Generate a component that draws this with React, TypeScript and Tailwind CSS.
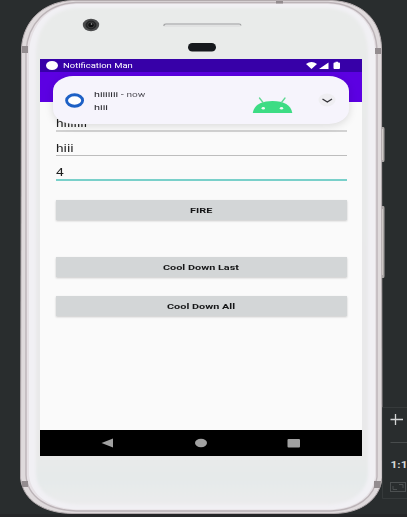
import type { ReactNode } from "react";

function PhoneBody() {
  return (
    <svg className="absolute inset-0" width="407" height="517" viewBox="0 0 407 517" fill="none">
      <defs>
        <linearGradient id="face" x1="0" y1="0" x2="0" y2="1">
          <stop offset="0" stopColor="#e9ebea" />
          <stop offset="0.5" stopColor="#e9e9ea" />
          <stop offset="0.9" stopColor="#e9e9e9" />
          <stop offset="0.95" stopColor="#e5eaea" />
          <stop offset="1" stopColor="#ebebec" />
        </linearGradient>
        <filter id="soft" x="-5%" y="-5%" width="110%" height="110%">
          <feGaussianBlur stdDeviation="1.6" />
        </filter>
      </defs>
      <path d="M380 127h3.500q1 0 1 2v31q0 2-1 2H380zM380 206h3.500q1 0 1 2v68q0 2-1 2H380z" fill="#aaa6a5" />
      <path d="M382.500 129v31M382.500 209v66" stroke="#d4d0cd" />
      <path d="M72 .5H332C364 2 381 22 381.500 48L382 478C380 499 362 513 334 513.500H72C44 513 23 501 20.500 478L21.500 48C23 22 42 2 72 .5Z" fill="#dfdadc" stroke="#b3abae" />
      <path d="M76 2.500H328C360 4 376.500 25 377 51V477C375 497 357 510 331 511H76C48 510 27 497 26 475V51C28 25 45 4 76 2.500Z" fill="#e6e1e5" stroke="#bcb4b8" strokeWidth="1.400" />
      <path d="M76 4H328C358 5 374.500 26 375 51V476C373 496 356 508.500 330 509.500H77C50 508.500 31 496 29 475V51C31 26 47 5 76 4Z" fill="#f1f0f4" />
      <path d="M76 8H328C354 9 368 28 368 52V475C366 492 353 503 330 504.500H77C52 503 37 492 36 474V52C37 28 51 9 76 8Z" fill="url(#face)" filter="url(#soft)" />
      <path d="M22 46h6v7h-6zM375 48h6v6h-6zM22 481h6v6h-6zM374 481h7l-1 7h-6zM276 1h7v2.500h-7z" fill="#938c8f" />
      <ellipse cx="91" cy="25" rx="8.200" ry="6.200" fill="#4b4c4d" />
      <ellipse cx="91" cy="25" rx="5.500" ry="4.400" fill="#252627" />
      <ellipse cx="91" cy="25" rx="3.300" ry="2.800" fill="#0e0f10" stroke="#555" strokeWidth=".6" />
      <circle cx="91.500" cy="24" r=".8" fill="#aaa" />
      <rect x="163" y="23" width="78" height="4" rx="2" fill="#e1e2e2" />
      <path d="M164 26V25q0-1 2-1H239q2 0 2 1.500" stroke="#a3a4a5" strokeWidth="1.200" />
      <rect x="188" y="43" width="28" height="8.500" rx="4.250" fill="#16191d" />
    </svg>
  );
}

function EmulatorControls() {
  return (
    <svg className="absolute left-[382px] top-[406px]" width="25" height="94" viewBox="0 0 25 94" fill="none">
      <path d="M.5 1.500H25M25 92.500H.5V1.500" stroke="#363a3b" />
      <path d="M8.500 13.500H21M13.500 8V19" stroke="#d4d6d6" strokeWidth="1.300" />
      <path d="M8.500 36.500H25" stroke="#484c4d" />
      <text x="8.500" y="62" fontFamily="Roboto, sans-serif" fontWeight="700" fontSize="9.500" textLength="17" lengthAdjust="spacingAndGlyphs" fill="#d7d9d9">1:1</text>
      <rect x="8.500" y="76.500" width="15" height="9" stroke="#4c5051" />
      <path d="M11 80v3.500h4M17 78.500h4V82" stroke="#4c5051" />
    </svg>
  );
}

function StatusBar() {
  return (
    <div className="flex h-[13px] items-center bg-[#3700a8] pl-[6px] text-white">
      <span className="h-[9px] w-[12px] rounded-[50%] bg-white" />
      <span className="ml-[5px] w-[100px] origin-left scale-x-[1.35] whitespace-nowrap pt-px text-[7px] leading-[13px]">Notification Man</span>
      <svg className="ml-[142px]" width="37" height="13" viewBox="0 0 37 13" fill="white">
        <path d="M1 5Q6.500 1.200 12 5L6.500 10ZM14 10L23.500 3.500V10ZM29.500 3.500h1V2.800h2.500v.7h1q1 0 1 1v4.500q0 1-1 1h-4.500q-1 0-1-1V4.500q0-1 1-1Z" />
      </svg>
    </div>
  );
}

function NotificationCard() {
  return (
    <div className="absolute left-[13px] top-[17px] flex h-[48px] w-[296px] items-center rounded-[20px/15px] bg-[#f6f4fc] shadow-[0_2px_9px_rgba(0,0,0,0.13)]">
      <svg className="ml-[12px] shrink-0" width="20" height="15" viewBox="0 0 20 15" fill="none">
        <ellipse cx="9.600" cy="7.500" rx="8" ry="5.700" fill="white" stroke="#1d60c5" strokeWidth="2.900" />
      </svg>
      <div className="ml-[8.500px] w-[100px] pt-[2px] text-[8px] leading-[13px] text-[#242329]">
        <p className="origin-left scale-x-[1.34] whitespace-nowrap">
          hiiiiiii - <span className="text-[7.500px] text-[#55535b]">now</span>
        </p>
        <p className="origin-left scale-x-[1.36] whitespace-nowrap">hiii</p>
      </div>
      <svg className="absolute left-[199px] top-[20px]" width="42" height="18" viewBox="0 0 42 18">
        <path d="M.8 17C2 9 9 5 20.500 5S39 9 40.300 17Z" fill="#3ddc84" />
        <path d="M11 6.500L7.500 2M29.500 6.500L33 2" stroke="#5fd892" strokeWidth="1.300" strokeLinecap="round" />
        <ellipse cx="11.300" cy="12.200" rx="1.700" ry="1.300" fill="#effbf6" />
        <ellipse cx="29.500" cy="12.200" rx="1.700" ry="1.300" fill="#effbf6" />
      </svg>
      <svg className="absolute right-[13px] top-[17px]" width="18" height="14" viewBox="0 0 18 14" fill="none">
        <ellipse cx="9" cy="7" rx="8.500" ry="6.500" fill="#efeef2" />
        <path d="M4.500 6L9.300 9L14 6" stroke="#353439" strokeWidth="1.400" />
      </svg>
    </div>
  );
}

function Field({ children, className }: { children: ReactNode; className: string }) {
  return (
    <div className={`ml-[16px] w-[291px] text-[11px] text-[#1f1f1f] ${className}`}>
      <span className="block origin-left scale-x-[1.25]">{children}</span>
    </div>
  );
}

function PushButton({ children, className }: { children: ReactNode; className: string }) {
  return (
    <button className={`ml-[15.500px] flex h-[20px] w-[291.500px] shrink-0 items-center justify-center bg-[#d3d6d7] pt-px text-[8px] font-bold text-[#151617] shadow-[0_1px_2px_rgba(0,0,0,0.2)] ${className}`}>
      <span className="block scale-x-[1.36] whitespace-nowrap">{children}</span>
    </button>
  );
}

export default function App() {
  return (
    <main className="relative h-[517px] w-[407px] overflow-hidden bg-[#292d2e] pl-[40px] pt-[59px] font-['Roboto','Noto_Sans',sans-serif]">
      <PhoneBody />
      <EmulatorControls />
      <div className="absolute inset-x-0 bottom-0 h-[3px] bg-[#252628]" />
      <section className="relative flex h-[397px] w-[322px] flex-col bg-[#fafafa]">
        <StatusBar />
        <div className="h-[30px] shrink-0 bg-[#5c00e2]" />
        <div className="flex flex-1 flex-col">
          <Field className="mt-[13px] h-[17px] border-b-2 border-[#d2d2d2] leading-[18px]">hiiiiiii</Field>
          <Field className="mt-[7px] h-[17px] border-b border-[#bdbdbd] leading-[19px]">hiii</Field>
          <Field className="mt-[8px] h-[17px] border-b-2 border-[#79d0ca] leading-[18px]">4</Field>
          <PushButton className="mt-[19px]">FIRE</PushButton>
          <PushButton className="mt-[37px]">Cool Down Last</PushButton>
          <PushButton className="mt-[19px]">Cool Down All</PushButton>
        </div>
        <nav className="h-[26px] shrink-0 bg-black">
          <svg width="322" height="26" viewBox="0 0 322 26" fill="#a1a1a1">
            <path d="M61.500 13L73 8.500V17.500Z" />
            <ellipse cx="161" cy="13" rx="6" ry="4.200" />
            <rect x="247.500" y="9" width="12.500" height="8.500" rx="1" />
          </svg>
        </nav>
        <NotificationCard />
      </section>
    </main>
  );
}
